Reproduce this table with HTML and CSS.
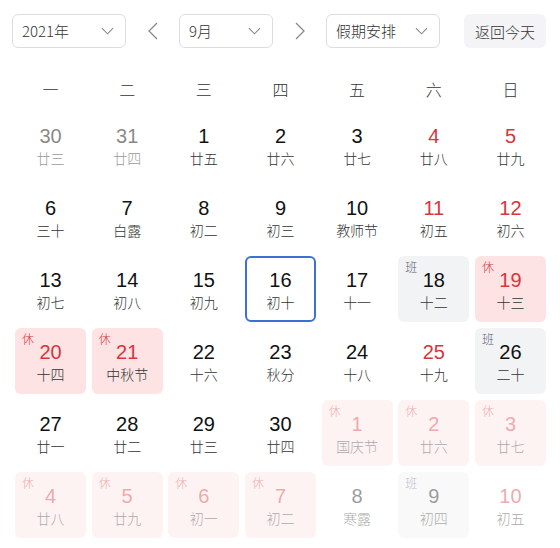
FILE: index.html
```html
<!DOCTYPE html>
<html lang="zh-CN">
<head>
<meta charset="utf-8">
<link rel="stylesheet" href="styles.css">
</head>
<body>
<div class="cal">
  <div class="toolbar">
    <div class="select w114"><span>2021年</span><svg class="chev" viewBox="0 0 14 8" width="13" height="8"><path d="M1 1l6 6 6-6" fill="none" stroke="#888" stroke-width="1.2"/></svg></div>
    <div class="arrow"><svg viewBox="0 0 10 18" width="10" height="18"><path d="M9 1L1 9l8 8" fill="none" stroke="#8a8a8a" stroke-width="1.3"/></svg></div>
    <div class="select w94"><span>9月</span><svg class="chev" viewBox="0 0 14 8" width="13" height="8"><path d="M1 1l6 6 6-6" fill="none" stroke="#888" stroke-width="1.2"/></svg></div>
    <div class="arrow"><svg viewBox="0 0 10 18" width="10" height="18"><path d="M1 1l8 8-8 8" fill="none" stroke="#8a8a8a" stroke-width="1.3"/></svg></div>
    <div class="select w114"><span>假期安排</span><svg class="chev" viewBox="0 0 14 8" width="13" height="8"><path d="M1 1l6 6 6-6" fill="none" stroke="#888" stroke-width="1.2"/></svg></div>
    <div class="today-btn">返回今天</div>
  </div>
  <div class="weekdays">
    <div>一</div><div>二</div><div>三</div><div>四</div><div>五</div><div>六</div><div>日</div>
  </div>
  <div class="grid">
    <div class="cell prev"><div class="num">30</div><div class="lunar">廿三</div></div>
    <div class="cell prev"><div class="num">31</div><div class="lunar">廿四</div></div>
    <div class="cell"><div class="num">1</div><div class="lunar">廿五</div></div>
    <div class="cell"><div class="num">2</div><div class="lunar">廿六</div></div>
    <div class="cell"><div class="num">3</div><div class="lunar">廿七</div></div>
    <div class="cell wk"><div class="num">4</div><div class="lunar">廿八</div></div>
    <div class="cell wk"><div class="num">5</div><div class="lunar">廿九</div></div>

    <div class="cell"><div class="num">6</div><div class="lunar">三十</div></div>
    <div class="cell"><div class="num">7</div><div class="lunar">白露</div></div>
    <div class="cell"><div class="num">8</div><div class="lunar">初二</div></div>
    <div class="cell"><div class="num">9</div><div class="lunar">初三</div></div>
    <div class="cell"><div class="num">10</div><div class="lunar">教师节</div></div>
    <div class="cell wk"><div class="num">11</div><div class="lunar">初五</div></div>
    <div class="cell wk"><div class="num">12</div><div class="lunar">初六</div></div>

    <div class="cell"><div class="num">13</div><div class="lunar">初七</div></div>
    <div class="cell"><div class="num">14</div><div class="lunar">初八</div></div>
    <div class="cell"><div class="num">15</div><div class="lunar">初九</div></div>
    <div class="cell today"><div class="num">16</div><div class="lunar">初十</div></div>
    <div class="cell"><div class="num">17</div><div class="lunar">十一</div></div>
    <div class="cell work"><span class="badge">班</span><div class="num">18</div><div class="lunar">十二</div></div>
    <div class="cell rest"><span class="badge">休</span><div class="num">19</div><div class="lunar">十三</div></div>

    <div class="cell rest"><span class="badge">休</span><div class="num">20</div><div class="lunar">十四</div></div>
    <div class="cell rest"><span class="badge">休</span><div class="num">21</div><div class="lunar">中秋节</div></div>
    <div class="cell"><div class="num">22</div><div class="lunar">十六</div></div>
    <div class="cell"><div class="num">23</div><div class="lunar">秋分</div></div>
    <div class="cell"><div class="num">24</div><div class="lunar">十八</div></div>
    <div class="cell wk"><div class="num">25</div><div class="lunar">十九</div></div>
    <div class="cell work"><span class="badge">班</span><div class="num">26</div><div class="lunar">二十</div></div>

    <div class="cell"><div class="num">27</div><div class="lunar">廿一</div></div>
    <div class="cell"><div class="num">28</div><div class="lunar">廿二</div></div>
    <div class="cell"><div class="num">29</div><div class="lunar">廿三</div></div>
    <div class="cell"><div class="num">30</div><div class="lunar">廿四</div></div>
    <div class="cell rest next"><span class="badge">休</span><div class="num">1</div><div class="lunar">国庆节</div></div>
    <div class="cell rest next"><span class="badge">休</span><div class="num">2</div><div class="lunar">廿六</div></div>
    <div class="cell rest next"><span class="badge">休</span><div class="num">3</div><div class="lunar">廿七</div></div>

    <div class="cell rest next"><span class="badge">休</span><div class="num">4</div><div class="lunar">廿八</div></div>
    <div class="cell rest next"><span class="badge">休</span><div class="num">5</div><div class="lunar">廿九</div></div>
    <div class="cell rest next"><span class="badge">休</span><div class="num">6</div><div class="lunar">初一</div></div>
    <div class="cell rest next"><span class="badge">休</span><div class="num">7</div><div class="lunar">初二</div></div>
    <div class="cell next"><div class="num">8</div><div class="lunar">寒露</div></div>
    <div class="cell work next"><span class="badge">班</span><div class="num">9</div><div class="lunar">初四</div></div>
    <div class="cell wk next"><div class="num">10</div><div class="lunar">初五</div></div>
  </div>
</div>
</body>
</html>
```

FILE: styles.css
```css
* { box-sizing: border-box; }
html, body { margin: 0; padding: 0; background: #fff; }
body {
  font-family: "Noto Sans CJK SC", "Noto Sans", sans-serif;
  font-weight: 300;
  color: #222;
  width: 560px;
  height: 548px;
  overflow: hidden;
}
.cal { padding: 14px 0 0 0; }
.toolbar {
  display: flex;
  align-items: center;
  height: 34px;
  padding-left: 12px;
}
.select {
  height: 34px;
  border: 1px solid #dcdde2;
  border-radius: 6px;
  display: flex;
  align-items: center;
  justify-content: space-between;
  padding: 0 11px 0 9px;
  font-size: 15px;
  color: #333;
}
.select span { line-height: 20px; }
.w114 { width: 114px; }
.w94 { width: 94px; }
.chev { display: block; }
.arrow {
  width: 53px;
  height: 34px;
  display: flex;
  align-items: center;
  justify-content: center;
}
.today-btn {
  margin-left: 24px;
  width: 82px;
  height: 34px;
  border-radius: 6px;
  background: #f4f4f6;
  display: flex;
  align-items: center;
  justify-content: center;
  font-size: 15px;
  color: #333;
}
.weekdays {
  margin: 20px 0 0 15px;
  width: 531px;
  height: 42px;
  display: grid;
  grid-template-columns: repeat(7, 71px);
  column-gap: 5.67px;
  align-items: center;
  font-size: 16px;
  color: #333;
}
.weekdays div { text-align: center; }
.grid {
  margin: 2px 0 0 15px;
  width: 531px;
  display: grid;
  grid-template-columns: repeat(7, 71px);
  grid-auto-rows: 66px;
  column-gap: 5.67px;
  row-gap: 6px;
}
.cell {
  position: relative;
  border-radius: 6px;
  text-align: center;
  padding-top: 13px;
}
.num {
  font-family: "Liberation Sans", Arial, sans-serif;
  font-weight: 400;
  font-size: 20px;
  line-height: 22px;
  color: #111;
}
.lunar {
  margin-top: 1px;
  font-size: 14px;
  line-height: 20px;
  color: #333;
}
.wk .num, .rest .num { color: #d8353c; }
.rest { background: #fde3e3; }
.work { background: #f2f3f5; }
.badge {
  position: absolute;
  left: 7px;
  top: 4px;
  font-size: 12px;
  line-height: 14px;
}
.rest .badge { color: #d8353c; }
.work .badge { color: #5a5c70; }
.today {
  border: 2px solid #3d6fd6;
  padding-top: 11px;
}
.prev { opacity: 0.5; }
.next { opacity: 0.42; }
```
